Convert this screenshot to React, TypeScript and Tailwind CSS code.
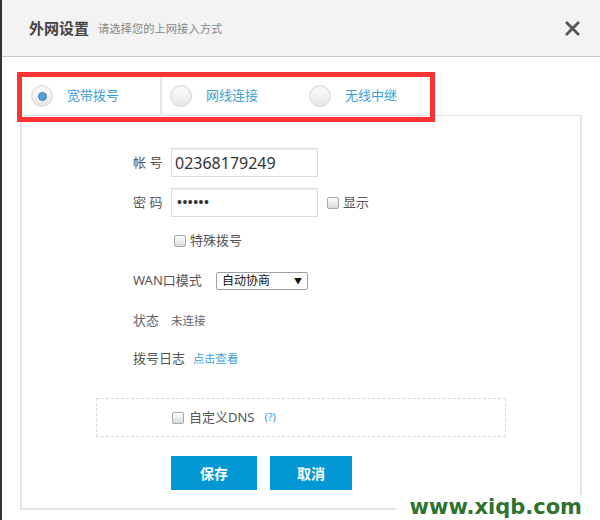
import React from 'react';

const font = { fontFamily: '"Noto Sans", "Noto Sans CJK SC", sans-serif' };

function Radio({ checked }: { checked?: boolean }) {
  return (
    <span className="flex h-[22px] w-[22px] shrink-0 items-center justify-center rounded-full border border-[#d8d8d8] bg-gradient-to-b from-[#ffffff] to-[#e6e6e6] shadow-[inset_0_1px_2px_rgba(0,0,0,0.08)]">
      {checked && (
        <span className="h-[9px] w-[9px] rounded-full border border-[#3d7fb8] bg-[#5a9fd6]" />
      )}
    </span>
  );
}

function Checkbox() {
  return (
    <span className="inline-block h-[12px] w-[12px] shrink-0 rounded-[2px] border border-[#a8a8a8] bg-gradient-to-b from-[#ffffff] to-[#d9d9d9]" />
  );
}

function Tab({ label, checked, divider }: { label: string; checked?: boolean; divider?: boolean }) {
  return (
    <div
      className={`flex h-full w-[139px] items-center gap-[14px] pl-[8px] ${
        divider ? 'border-r-2 border-[#e8e8e8]' : ''
      }`}
    >
      <Radio checked={checked} />
      <span className="text-[13px] text-[#3aa0d8]">{label}</span>
    </div>
  );
}

export default function App() {
  return (
    <div
      className="relative h-[520px] w-[600px] overflow-hidden border-l-2 border-[#333333] bg-white"
      style={font}
    >
      {/* Header */}
      <div className="flex h-[57px] items-center border-b border-[#c8c8c8] bg-[#f3f3f3] pl-[27px] pr-[20px]">
        <span className="text-[15px] font-bold text-[#444444]">外网设置</span>
        <span className="ml-[9px] mt-[2px] text-[11.3px] text-[#888888]">请选择您的上网接入方式</span>
        <svg className="ml-auto" width="15" height="15" viewBox="0 0 15 15">
          <path d="M2 2 L13 13 M13 2 L2 13" stroke="#555" strokeWidth="2.8" strokeLinecap="square" />
        </svg>
      </div>

      {/* Body */}
      <div className="ml-[18px] mr-[18px] pt-[20px]">
        {/* Tabs */}
        <div className="ml-[3px] flex h-[38px] bg-white">
          <Tab label="宽带拨号" checked divider />
          <Tab label="网线连接" />
          <Tab label="无线中继" />
        </div>

        {/* Panel */}
        <div className="h-[395px] border-2 border-[#e3e3e3] border-t">
          <div className="mt-[32px] flex h-[29px] items-center pl-[111px]">
            <span className="w-[38px] text-[13px] text-[#555555]">帐 号</span>
            <div className="flex h-[29px] w-[147px] items-center border border-[#dcdcdc] pl-[3px] text-[16px] text-[#333333] shadow-[inset_0_1px_2px_rgba(0,0,0,0.06)]">
              02368179249
            </div>
          </div>

          <div className="mt-[11px] flex h-[29px] items-center pl-[111px]">
            <span className="w-[38px] text-[13px] text-[#555555]">密 码</span>
            <div className="flex h-[29px] w-[147px] items-center border border-[#dcdcdc] pl-[5px] text-[13px] font-bold tracking-[0.5px] text-[#333333] shadow-[inset_0_1px_2px_rgba(0,0,0,0.06)]">
              ••••••
            </div>
            <span className="ml-[9px] flex items-center gap-[4px]">
              <Checkbox />
              <span className="text-[13px] text-[#555555]">显示</span>
            </span>
          </div>

          <div className="mt-[14px] flex h-[20px] items-center gap-[4px] pl-[152px]">
            <Checkbox />
            <span className="text-[13px] text-[#555555]">特殊拨号</span>
          </div>

          <div className="mt-[20px] flex h-[20px] items-center pl-[111px]">
            <span className="w-[83px] text-[13px] text-[#555555]">WAN口模式</span>
            <div className="flex h-[18px] w-[92px] items-center justify-between rounded-[2px] border border-[#a0a0a0] pl-[5px] pr-[5px] text-[12px] text-[#111111]">
              <span>自动协商</span>
              <span className="text-[8px]">▼</span>
            </div>
          </div>

          <div className="mt-[20px] flex h-[20px] items-center pl-[111px]">
            <span className="w-[38px] text-[13px] text-[#666666]">状态</span>
            <span className="text-[11.5px] text-[#666666]">未连接</span>
          </div>

          <div className="mt-[18px] flex h-[20px] items-center pl-[111px]">
            <span className="w-[60px] text-[13px] text-[#555555]">拨号日志</span>
            <span className="text-[11.3px] text-[#3a9ee0]">点击查看</span>
          </div>

          <div className="ml-[74px] mt-[29px] flex h-[39px] w-[410px] items-center border border-dashed border-[#d8d8d8] pl-[75px]">
            <Checkbox />
            <span className="ml-[5px] text-[13px] text-[#555555]">自定义DNS</span>
            <span className="ml-[10px] text-[11px] text-[#3a9ee0]">(?)</span>
          </div>

          <div className="mt-[19px] flex gap-[13px] pl-[149px]">
            <button className="flex h-[34px] w-[86px] items-center justify-center bg-[#0398d3] text-[14px] font-bold text-white">
              保存
            </button>
            <button className="flex h-[34px] w-[82px] items-center justify-center bg-[#0398d3] text-[14px] font-bold text-white">
              取消
            </button>
          </div>
        </div>
      </div>

      {/* Annotation box */}
      <div className="absolute left-[15px] top-[72px] h-[50px] w-[418px] border-[5px] border-[#fc3434]" />

      {/* Watermark */}
      <div
        className="absolute bottom-[1px] right-[18px] bg-white pl-[14px] text-[21px] font-bold leading-[24px] text-[#2f7330]"
        style={{ fontFamily: '"DejaVu Sans", sans-serif' }}
      >
        www.xiqb.com
      </div>
    </div>
  );
}
